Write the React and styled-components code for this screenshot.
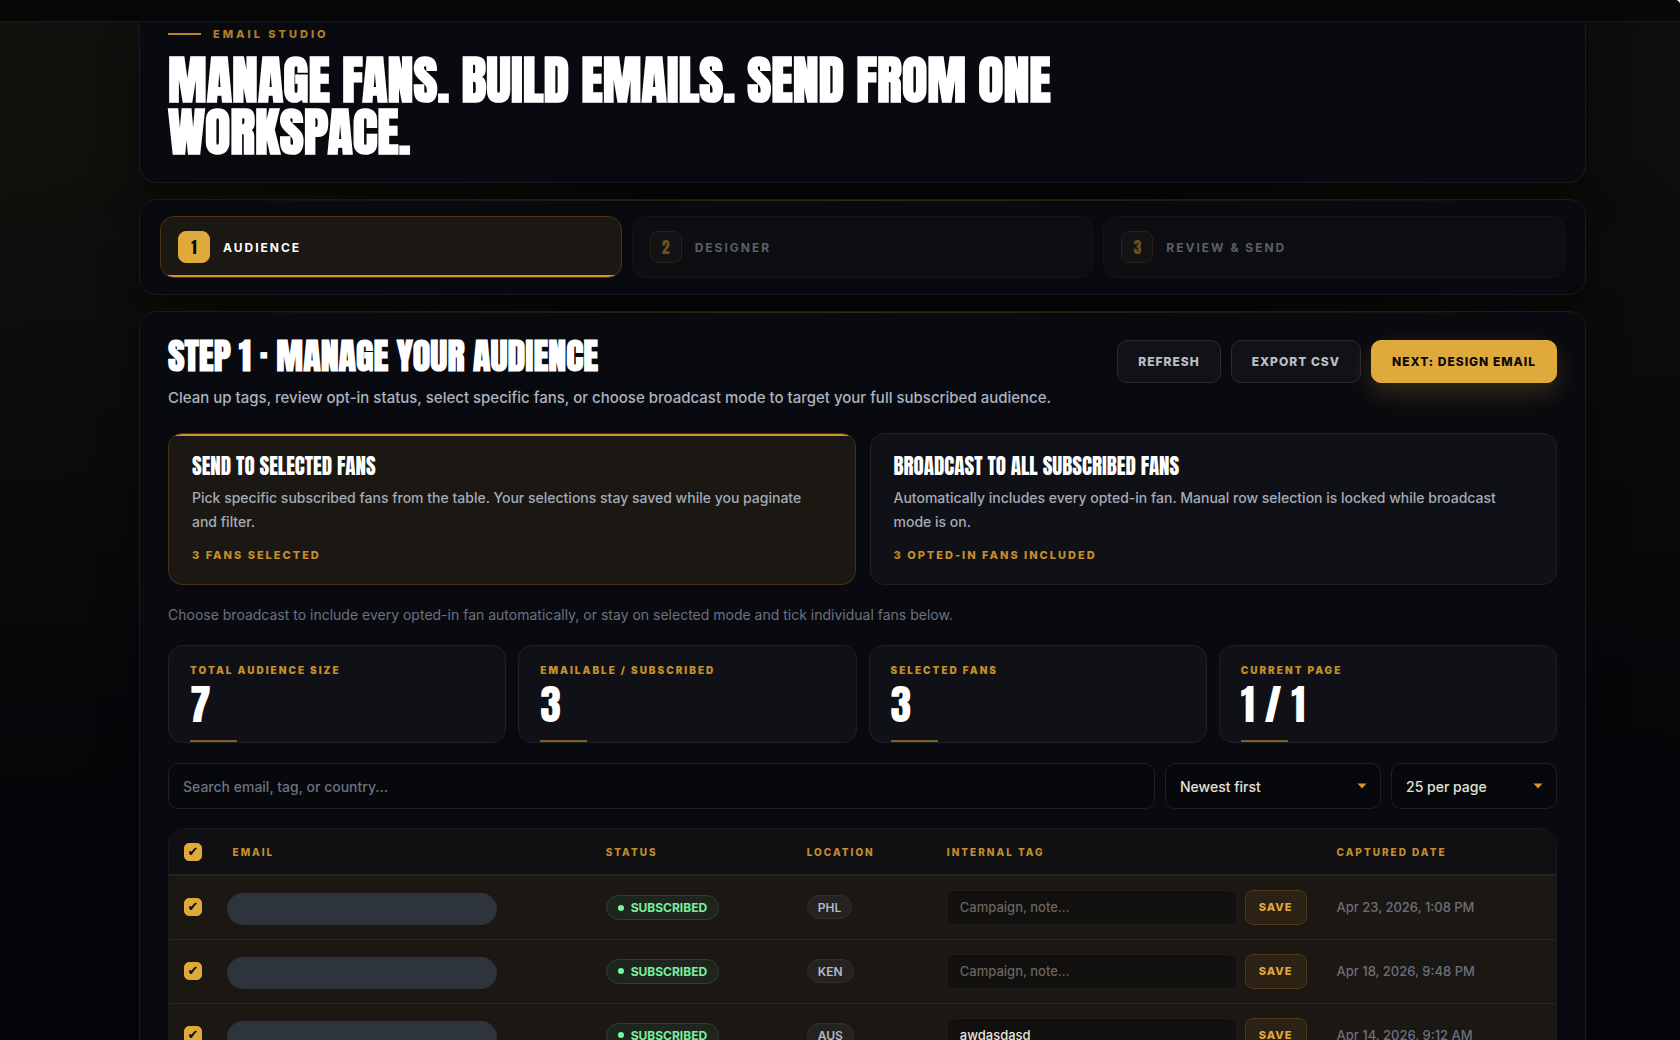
import React, { useState } from "react";
import styled, { createGlobalStyle } from "styled-components";

const steps = ["Audience", "Designer", "Review & Send"];

const stats = [
  { label: "Total audience size", value: "7" },
  { label: "Emailable / Subscribed", value: "3" },
  { label: "Selected fans", value: "3" },
  { label: "Current page", value: "1 / 1" },
];

const fans = [
  { id: 1, location: "PHL", tag: "", date: "Apr 23, 2026, 1:08 PM" },
  { id: 2, location: "KEN", tag: "", date: "Apr 18, 2026, 9:48 PM" },
  { id: 3, location: "AUS", tag: "awdasdasd", date: "Apr 14, 2026, 9:12 AM" },
];

function Dropdown({ label, wide, options }) {
  return (
    <SelectWrap $wide={wide}>
      <select aria-label={label}>
        {options.map((o) => (
          <option key={o}>{o}</option>
        ))}
      </select>
      <svg width="10" height="6" viewBox="0 0 10 6" aria-hidden="true">
        <path d="M0.5 0.5h9L5 5.5z" fill="#d4952b" />
      </svg>
    </SelectWrap>
  );
}

function FanRow({ fan, checked, onToggle }) {
  const [tag, setTag] = useState(fan.tag);
  return (
    <tr>
      <td>
        <Check type="checkbox" aria-label={`Select fan ${fan.id}`} checked={checked} onChange={onToggle} />
      </td>
      <td>
        <HiddenEmail />
      </td>
      <td>
        <Status>Subscribed</Status>
      </td>
      <td>
        <Country>{fan.location}</Country>
      </td>
      <td>
        <TagForm onSubmit={(e) => e.preventDefault()}>
          <TagInput aria-label="Internal tag" placeholder="Campaign, note..." value={tag} onChange={(e) => setTag(e.target.value)} />
          <SaveButton type="submit">Save</SaveButton>
        </TagForm>
      </td>
      <DateCell>{fan.date}</DateCell>
    </tr>
  );
}

function App() {
  const [step, setStep] = useState(0);
  const [mode, setMode] = useState("selected");
  const [picked, setPicked] = useState([1, 2, 3]);

  const toggle = (id) => {
    setPicked(picked.includes(id) ? picked.filter((p) => p !== id) : [...picked, id]);
  };
  const allPicked = picked.length === fans.length;

  return (
    <Page>
      <GlobalStyle />
      <TopBar />
      <Content>
        <Hero>
          <Eyebrow>Email Studio</Eyebrow>
          <h1>Manage fans. Build emails. Send from one workspace.</h1>
        </Hero>

        <StepsPanel>
          {steps.map((name, i) => (
            <Step key={name} type="button" $active={step === i} onClick={() => setStep(i)}>
              <span>{i + 1}</span>
              {name}
            </Step>
          ))}
        </StepsPanel>

        <AudiencePanel>
          <PanelHead>
            <div>
              <h2>Step 1 · Manage your audience</h2>
              <p>Clean up tags, review opt-in status, select specific fans, or choose broadcast mode to target your full subscribed audience.</p>
            </div>
            <Actions>
              <Button type="button">Refresh</Button>
              <Button type="button">Export CSV</Button>
              <Button type="button" $primary>Next: Design Email</Button>
            </Actions>
          </PanelHead>

          <Modes>
            <Mode type="button" $active={mode === "selected"} onClick={() => setMode("selected")}>
              <strong>Send to selected fans</strong>
              <span>Pick specific subscribed fans from the table. Your selections stay saved while you paginate and filter.</span>
              <em>3 fans selected</em>
            </Mode>
            <Mode type="button" $active={mode === "broadcast"} onClick={() => setMode("broadcast")}>
              <strong>Broadcast to all subscribed fans</strong>
              <span>Automatically includes every opted-in fan. Manual row selection is locked while broadcast mode is on.</span>
              <em>3 opted-in fans included</em>
            </Mode>
          </Modes>

          <Hint>Choose broadcast to include every opted-in fan automatically, or stay on selected mode and tick individual fans below.</Hint>

          <Stats>
            {stats.map((s) => (
              <Stat key={s.label}>
                <span>{s.label}</span>
                <strong>{s.value}</strong>
              </Stat>
            ))}
          </Stats>

          <Filters>
            <Search type="search" aria-label="Search fans" placeholder="Search email, tag, or country..." />
            <Dropdown label="Sort" wide options={["Newest first", "Oldest first"]} />
            <Dropdown label="Page size" options={["25 per page", "50 per page"]} />
          </Filters>

          <TableBox>
            <Table>
              <colgroup>
                <col style={{ width: "3.5%" }} />
                <col style={{ width: "26.9%" }} />
                <col style={{ width: "14.5%" }} />
                <col style={{ width: "10.1%" }} />
                <col style={{ width: "28.1%" }} />
                <col />
              </colgroup>
              <thead>
                <tr>
                  <th>
                    <Check
                      type="checkbox"
                      aria-label="Select all fans"
                      checked={allPicked}
                      onChange={() => setPicked(allPicked ? [] : fans.map((f) => f.id))}
                    />
                  </th>
                  <th>Email</th>
                  <th>Status</th>
                  <th>Location</th>
                  <th>Internal tag</th>
                  <th>Captured date</th>
                </tr>
              </thead>
              <tbody>
                {fans.map((fan) => (
                  <FanRow key={fan.id} fan={fan} checked={picked.includes(fan.id)} onToggle={() => toggle(fan.id)} />
                ))}
              </tbody>
            </Table>
          </TableBox>
        </AudiencePanel>
      </Content>
    </Page>
  );
}

export default App;

const display = `"Anton", "Impact", "Roboto Condensed", "Liberation Sans Narrow", sans-serif`;

const GlobalStyle = createGlobalStyle`
  * {
    box-sizing: border-box;
  }
  body {
    margin: 0;
    background: #040508;
    color: #fff;
    font-family: "Inter", sans-serif;
  }
  button, input, select {
    font-family: inherit;
    margin: 0;
  }
  h1, h2, p {
    margin: 0;
  }
`;

const Page = styled.div`
  height: 100vh;
  overflow: hidden;
  background:
    radial-gradient(circle at 0% 8%, rgba(200, 180, 110, 0.05), transparent 40%),
    radial-gradient(circle at 100% 16%, rgba(200, 180, 110, 0.03), transparent 36%),
    linear-gradient(#090909, #040508 70%);
`;

const TopBar = styled.header`
  position: relative;
  height: 22px;
  background: #070707;
  border-bottom: 1px solid #21190c;

  &::after {
    content: "";
    position: absolute;
    top: 0;
    right: 0;
    width: 3px;
    height: 3px;
    background: radial-gradient(circle at 0 100%, transparent 2px, #fff 3px);
  }
`;

const Content = styled.main`
  display: flex;
  flex-direction: column;
  gap: 16px;
  padding: 0 94px 0 139px;
`;

const Panel = styled.section`
  position: relative;
  background: #090a0f;
  border: 1px solid #1a1b20;
  border-radius: 18px;
  box-shadow: 0 16px 40px rgba(0, 0, 0, 0.4);

  &::before {
    content: "";
    position: absolute;
    top: 0;
    left: 18px;
    right: 18px;
    height: 1px;
    background: linear-gradient(90deg, transparent, rgba(212, 149, 43, 0.22), transparent);
  }
`;

const Hero = styled(Panel)`
  border-top: 0;
  border-radius: 0 0 18px 18px;
  padding: 4px 28px 24px;

  &::before {
    display: none;
  }
  h1 {
    max-width: 960px;
    font-family: ${display};
    font-size: 52px;
    line-height: 52px;
    font-weight: 700;
    text-transform: uppercase;
  }
`;

const Eyebrow = styled.div`
  display: flex;
  align-items: center;
  gap: 12px;
  margin-bottom: 12px;
  color: #b07f28;
  font-size: 11px;
  line-height: 16px;
  font-weight: 800;
  letter-spacing: 3px;
  text-transform: uppercase;

  &::before {
    content: "";
    width: 33px;
    height: 2px;
    background: #b8842a;
  }
`;

const StepsPanel = styled(Panel)`
  display: grid;
  grid-template-columns: repeat(3, 1fr);
  gap: 10px;
  padding: 16px 20px;
`;

const Step = styled.button`
  display: flex;
  align-items: center;
  gap: 13px;
  padding: 14px 17px;
  border: 1px solid ${(p) => (p.$active ? "#4a3517" : "#141519")};
  border-radius: 14px;
  background: ${(p) => (p.$active ? "linear-gradient(#d4952b, #d4952b) bottom / 100% 2px no-repeat #1b1713" : "#0d0e12")};
  color: ${(p) => (p.$active ? "#fff" : "#5a5f69")};
  font-size: 12px;
  font-weight: 700;
  letter-spacing: 2px;
  text-transform: uppercase;

  span {
    display: grid;
    place-items: center;
    width: 32px;
    height: 32px;
    border: 1px solid ${(p) => (p.$active ? "#e0a93b" : "#2a2013")};
    border-radius: 8px;
    background: ${(p) => (p.$active ? "#e0a93b" : "#131214")};
    color: ${(p) => (p.$active ? "#0a0a0a" : "#70501f")};
    font-family: ${display};
    font-size: 16px;
    font-weight: 400;
    letter-spacing: 0;
  }
`;

const AudiencePanel = styled(Panel)`
  padding: 28px 28px 26px;
`;

const PanelHead = styled.div`
  display: flex;
  justify-content: space-between;
  align-items: flex-start;
  gap: 24px;

  h2 {
    font-family: ${display};
    font-size: 36px;
    line-height: 32px;
    font-weight: 700;
    text-transform: uppercase;
  }
  p {
    margin-top: 14px;
    color: #acb3be;
    font-size: 15px;
    line-height: 24px;
    font-weight: 500;
  }
`;

const Actions = styled.div`
  display: flex;
  gap: 10px;
  flex-shrink: 0;
`;

const Button = styled.button`
  height: 43px;
  padding: 0 20px;
  border: 1px solid ${(p) => (p.$primary ? "#e0a93b" : "#2a2b2f")};
  border-radius: 10px;
  background: ${(p) => (p.$primary ? "#e0a93b" : "#111216")};
  box-shadow: ${(p) => (p.$primary ? "0 10px 26px rgba(224, 169, 59, 0.2)" : "none")};
  color: ${(p) => (p.$primary ? "#0a0a0a" : "#b9c0cb")};
  font-size: 12px;
  font-weight: 800;
  letter-spacing: 1px;
  text-transform: uppercase;
`;

const Modes = styled.div`
  display: grid;
  grid-template-columns: 1fr 1fr;
  gap: 14px;
  margin-top: 23px;
`;

const Mode = styled.button`
  display: flex;
  flex-direction: column;
  align-items: flex-start;
  padding: 19px 28px 20px 23px;
  border: 1px solid ${(p) => (p.$active ? "#44321a" : "#1f2025")};
  border-radius: 14px;
  background: ${(p) => (p.$active ? "linear-gradient(#d4952b, #d4952b) top / 100% 2px no-repeat #1b1713" : "#101116")};
  color: #fff;
  text-align: left;

  strong {
    font-family: ${display};
    font-size: 21px;
    font-weight: 400;
    line-height: 26px;
    text-transform: uppercase;
  }
  span {
    margin-top: 7px;
    color: #a4abb6;
    font-size: 14px;
    line-height: 24px;
    font-weight: 500;
  }
  em {
    margin-top: 12px;
    color: #c48e2b;
    font-size: 11px;
    line-height: 18px;
    font-style: normal;
    font-weight: 800;
    letter-spacing: 2px;
    text-transform: uppercase;
  }
`;

const Hint = styled.p`
  && {
    margin-top: 20px;
  }
  color: #6b7280;
  font-size: 14px;
  line-height: 20px;
`;

const Stats = styled.div`
  display: grid;
  grid-template-columns: repeat(4, 1fr);
  gap: 12px;
  margin-top: 20px;
`;

const Stat = styled.div`
  display: flex;
  flex-direction: column;
  padding: 16px 21px 0;
  border: 1px solid #1f2025;
  border-radius: 14px;
  background: #101116;

  span {
    color: #c48e2b;
    font-size: 10px;
    line-height: 16px;
    font-weight: 900;
    letter-spacing: 2px;
    text-transform: uppercase;
  }
  strong {
    padding: 6px 0 14px;
    font-family: ${display};
    font-size: 42px;
    font-weight: 400;
    line-height: 42px;
  }
  &::after {
    content: "";
    width: 47px;
    height: 2px;
    background: #7e5e28;
  }
`;

const Filters = styled.div`
  display: flex;
  gap: 10px;
  margin-top: 20px;
`;

const Search = styled.input`
  flex: 1;
  min-width: 0;
  height: 46px;
  padding: 0 14px;
  border: 1px solid #1f2023;
  border-radius: 10px;
  outline: 0;
  background: #07080b;
  color: #eee;
  font-size: 14px;
  font-weight: 500;

  &::placeholder {
    color: #6b7280;
    opacity: 1;
  }
`;

const SelectWrap = styled.div`
  position: relative;
  width: ${(p) => (p.$wide ? "216px" : "166px")};

  select {
    appearance: none;
    width: 100%;
    height: 46px;
    padding: 0 34px 0 14px;
    border: 1px solid #1f2023;
    border-radius: 10px;
    background: #07080b;
    color: #e3e0da;
    font-size: 14px;
    font-weight: 500;
  }
  svg {
    position: absolute;
    top: 20px;
    right: 14px;
    pointer-events: none;
  }
`;

const TableBox = styled.div`
  margin-top: 19px;
  overflow: hidden;
  border: 1px solid #17181d;
  border-radius: 16px;
`;

const Table = styled.table`
  width: 100%;
  table-layout: fixed;
  border-collapse: collapse;

  th, td {
    padding: 0 15px;
    text-align: left;
  }
  th {
    height: 46px;
    background: #101013;
    border-bottom: 2px solid #252424;
    color: #c48e2b;
    font-size: 10px;
    font-weight: 800;
    letter-spacing: 2px;
    text-transform: uppercase;
  }
  td {
    height: 64px;
    background: #1b1713;
    border-bottom: 1px solid #282421;
  }
`;

const Check = styled.input`
  appearance: none;
  display: grid;
  place-items: center;
  width: 18px;
  height: 18px;
  border: 1px solid #e0a93b;
  border-radius: 5px;
  background: ${(p) => (p.checked ? "#e0a93b" : "transparent")};

  &:checked::after {
    content: "✔";
    color: #0a0a0a;
    font-family: "DejaVu Sans", sans-serif;
    font-size: 13px;
    line-height: 16px;
    letter-spacing: 0;
  }
`;

const HiddenEmail = styled.div`
  width: 270px;
  max-width: 100%;
  height: 32px;
  margin: 4px 0 0 -6px;
  border-radius: 16px;
  background: #2d343c;
`;

const Status = styled.span`
  display: inline-flex;
  align-items: center;
  gap: 7px;
  height: 25px;
  padding: 0 11px;
  border: 1px solid #25442d;
  border-radius: 13px;
  background: #1e251c;
  color: #7ceea0;
  font-size: 12px;
  font-weight: 700;
  text-transform: uppercase;

  &::before {
    content: "";
    width: 6px;
    height: 6px;
    border-radius: 50%;
    background: #7cf5a0;
  }
`;

const Country = styled.span`
  display: inline-flex;
  align-items: center;
  height: 24px;
  padding: 0 10px;
  border: 1px solid #312e2c;
  border-radius: 12px;
  background: #252221;
  color: #b4bac4;
  font-size: 12px;
  font-weight: 600;
`;

const TagForm = styled.form`
  display: flex;
  gap: 8px;
`;

const TagInput = styled.input`
  flex: 1;
  min-width: 0;
  height: 35px;
  padding: 0 12px;
  border: 1px solid #1e1c1a;
  border-radius: 8px;
  outline: 0;
  background: #11100e;
  color: #e8e4dc;
  font-size: 13px;
  font-weight: 500;

  &::placeholder {
    color: #68655f;
    opacity: 1;
  }
`;

const SaveButton = styled.button`
  height: 35px;
  padding: 0 13px;
  border: 1px solid #503a17;
  border-radius: 8px;
  background: #2b2115;
  color: #e0a93b;
  font-size: 11px;
  font-weight: 800;
  letter-spacing: 1px;
  text-transform: uppercase;
`;

const DateCell = styled.td`
  color: #6b707c;
  font-size: 13px;
  font-weight: 500;
`;
